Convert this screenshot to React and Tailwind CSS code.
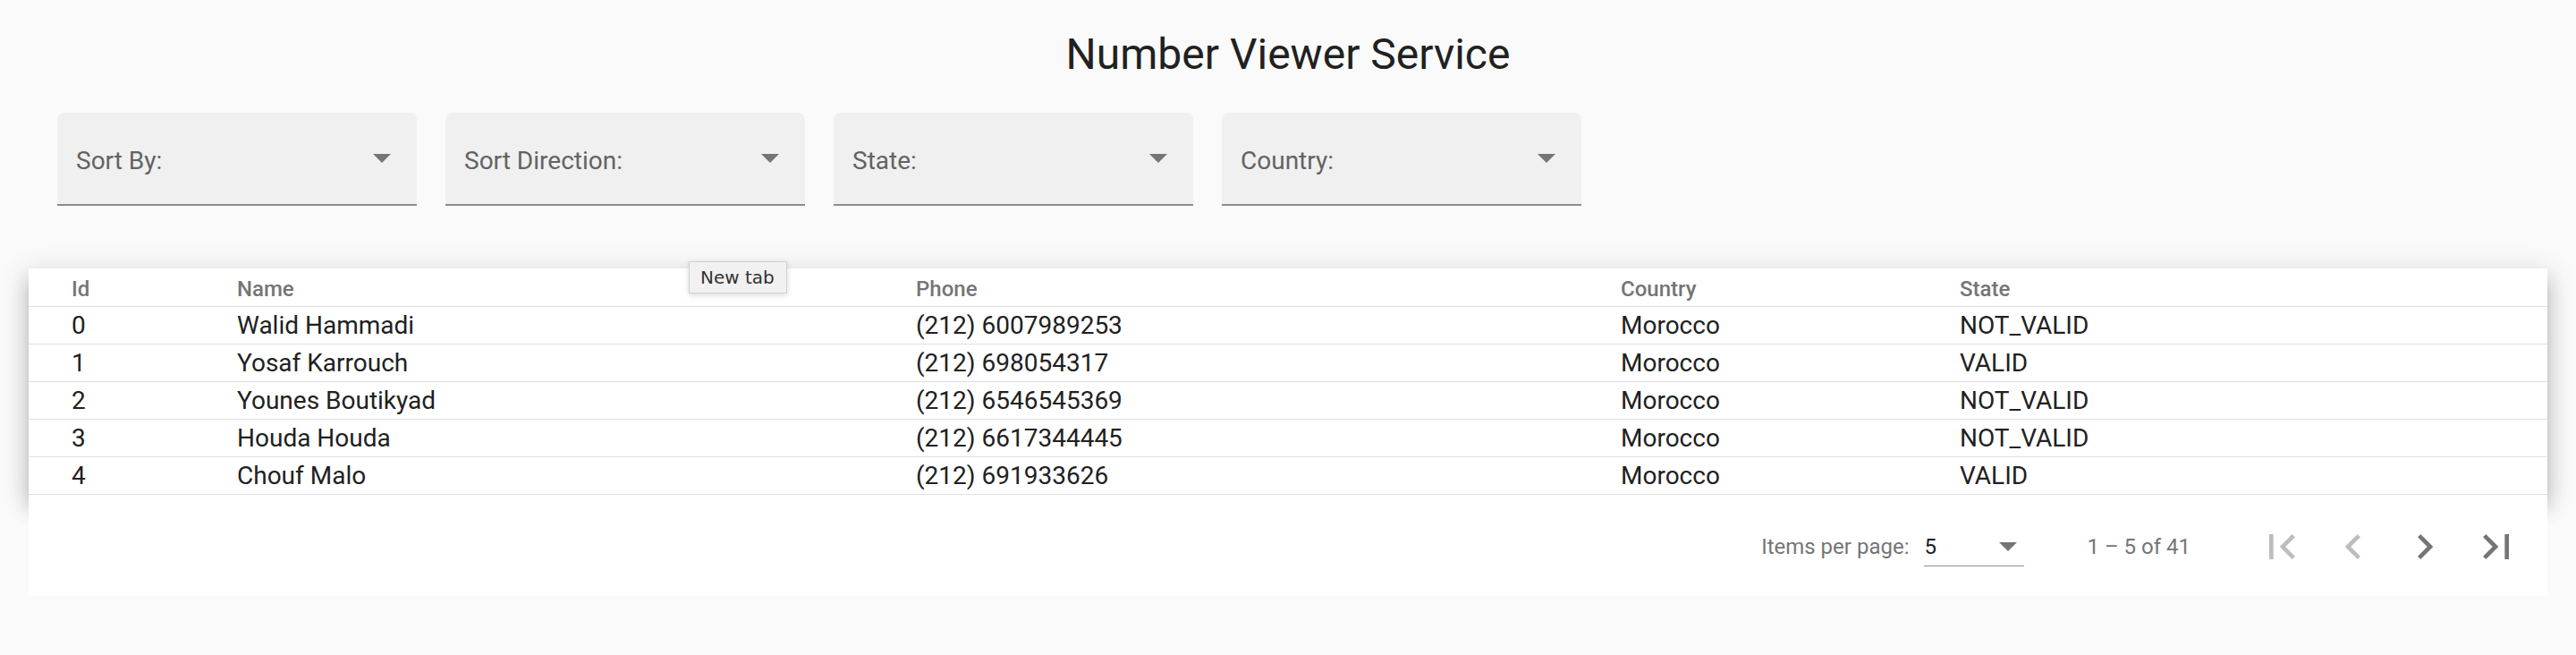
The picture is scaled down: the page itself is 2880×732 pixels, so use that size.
import React from "react";

const rows = [
  { id: 0, name: "Walid Hammadi", phone: "(212) 6007989253", country: "Morocco", state: "NOT_VALID" },
  { id: 1, name: "Yosaf Karrouch", phone: "(212) 698054317", country: "Morocco", state: "VALID" },
  { id: 2, name: "Younes Boutikyad", phone: "(212) 6546545369", country: "Morocco", state: "NOT_VALID" },
  { id: 3, name: "Houda Houda", phone: "(212) 6617344445", country: "Morocco", state: "NOT_VALID" },
  { id: 4, name: "Chouf Malo", phone: "(212) 691933626", country: "Morocco", state: "VALID" },
];

const filters = ["Sort By:", "Sort Direction:", "State:", "Country:"];

function Arrow() {
  return (
    <div className="w-0 h-0 border-l-[10px] border-r-[10px] border-t-[10px] border-l-transparent border-r-transparent border-t-[#757575]" />
  );
}

function Field({ label }) {
  return (
    <div className="w-[402px] h-[104px] bg-[#f0f0f0] rounded-t-[8px] border-b-2 border-[#8c8c8c] flex items-center justify-between pl-[21px] pr-[29px]">
      <span className="pt-[5px] text-[28px] leading-[32px] text-[#636363]">{label}</span>
      <Arrow />
    </div>
  );
}

function Icon({ d, color }) {
  return (
    <button className="w-[80px] h-[80px] flex items-center justify-center">
      <svg width="56" height="56" viewBox="0 0 24 24" fill={color}>
        <path d={d} />
      </svg>
    </button>
  );
}

const gridCols = "grid grid-cols-[185px_759px_788px_379px_1fr] pl-[48px]";

export default function App() {
  return (
    <div className="relative min-h-[732px] bg-[#fafafa] font-[Roboto,sans-serif] text-[#212121]">
      <h1 className="pt-[32px] text-center text-[48px] leading-[58px] font-normal text-[#212121]">
        Number Viewer Service
      </h1>

      <div className="flex gap-[32px] pl-[64px] mt-[36px]">
        {filters.map((f) => (
          <Field key={f} label={f} />
        ))}
      </div>

      <div className="mx-[32px] mt-[70px] bg-white">
        <div className="bg-white shadow-[0_10px_10px_-6px_rgba(0,0,0,0.2),0_16px_20px_2px_rgba(0,0,0,0.14),0_6px_28px_4px_rgba(0,0,0,0.12)]">
          <div className={`${gridCols} h-[43px] items-center pt-[3px] border-b border-[#e0e0e0] text-[24px] leading-[28px] font-medium text-[#757575]`}>
            <div>Id</div>
            <div>Name</div>
            <div>Phone</div>
            <div>Country</div>
            <div>State</div>
          </div>
          {rows.map((r) => (
            <div
              key={r.id}
              className={`${gridCols} h-[42px] items-center border-b border-[#e0e0e0] text-[28px] leading-[32px] text-[#212121]`}
            >
              <div>{r.id}</div>
              <div>{r.name}</div>
              <div>{r.phone}</div>
              <div>{r.country}</div>
              <div>{r.state}</div>
            </div>
          ))}
        </div>

        <div className="relative bg-white h-[113px] flex items-center justify-end pr-[17px] pt-[3px]">
          <span className="text-[24px] leading-[28px] text-[#757575] mr-[17px]">Items per page:</span>
          <div className="w-[112px] h-[44px] flex items-center justify-between border-b-[1.5px] border-[#8c8c8c] pr-[8px] mr-[70px]">
            <span className="text-[24px] leading-[28px] text-[#212121]">5</span>
            <Arrow />
          </div>
          <span className="text-[24px] leading-[28px] text-[#757575] mr-[62px]">1 – 5 of 41</span>
          <div className="flex">
            <Icon color="#bdbdbd" d="M18.41 16.59L13.82 12l4.59-4.59L17 6l-6 6 6 6zM6 6h2v12H6z" />
            <Icon color="#bdbdbd" d="M15.41 7.41L14 6l-6 6 6 6 1.41-1.41L10.83 12z" />
            <Icon color="#757575" d="M10 6L8.59 7.41 13.17 12l-4.58 4.59L10 18l6-6z" />
            <Icon color="#757575" d="M5.59 7.41L10.18 12l-4.59 4.59L7 18l6-6-6-6zM16 6h2v12h-2z" />
          </div>
        </div>
      </div>

      <div className="absolute left-[770px] top-[292px] w-[110px] h-[36px] bg-[#f1f1f1] border border-[#d2d2d2] shadow-[0_2px_6px_rgba(0,0,0,0.15)] flex items-center pl-[12px] font-['DejaVu_Sans',sans-serif] text-[20px] leading-[24px] text-[#333333]">
        New tab
      </div>
    </div>
  );
}
